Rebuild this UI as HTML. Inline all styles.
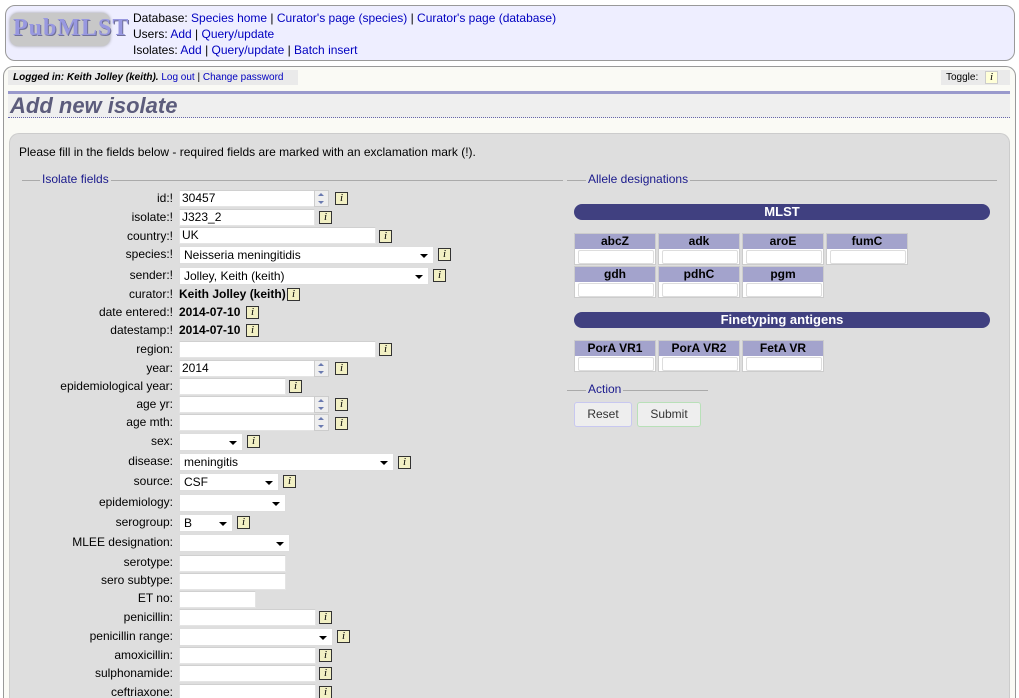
<!DOCTYPE html>
<html style="height:698px;overflow:hidden"><head><meta charset="utf-8">
<style>
*{box-sizing:border-box}
body{margin:0;width:1019px;height:698px;overflow:hidden;background:#fff;font-family:"Liberation Sans",Arial,sans-serif;font-size:12px;color:#000;position:relative}
a{color:#0000c0;text-decoration:none}
.abs{position:absolute}
.lbl{position:absolute;right:846px;white-space:nowrap;font-size:12px;line-height:14px}
.inp{position:absolute;height:17px;background:#fff;border:1px solid #e4e4e4;border-top-color:#d0d0d0;font-size:12px;line-height:15px;padding-left:2px}
.sel{position:absolute;height:18px;background:#fff;border:1px solid #ddd;font-size:12px;line-height:16px;padding-left:4px}
.sel:after{content:"";position:absolute;right:5px;top:7px;border-left:4px solid transparent;border-right:4px solid transparent;border-top:4px solid #000}
.spin{position:absolute;width:15px;height:17px;background:#eee;border:1px solid #ccc}
.spin:before{content:"";position:absolute;left:3px;top:2px;border-left:3px solid transparent;border-right:3px solid transparent;border-bottom:3px solid #6a7ab0}
.spin:after{content:"";position:absolute;left:3px;top:10px;border-left:3px solid transparent;border-right:3px solid transparent;border-top:3px solid #6a7ab0}
.i{position:absolute;width:13px;height:13px;background:#f2f0c4;border:1px solid #333;font-family:"Liberation Serif",serif;font-style:italic;font-size:11px;line-height:11px;text-align:center}
.b{position:absolute;font-weight:bold;font-size:12px;line-height:14px}
.cell{position:absolute;width:82px;height:32px;border:1px solid #ccc;background:#fff}
.cell .h{background:#a3a3cc;height:15px;text-align:center;font-weight:bold;font-size:12px;line-height:15px}
.cell .f{position:absolute;left:3px;top:16px;width:76px;height:14px;border:1px solid #ddd;border-radius:2px}
.bar{position:absolute;left:574px;width:416px;height:16px;background:#404080;border-radius:8px;color:#fff;font-weight:bold;font-size:13px;text-align:center;line-height:16px}
.leg{position:absolute;color:#1a1a8c;font-size:12px;line-height:14px;background:#dedede;padding:0 2px}
.hl{position:absolute;height:1px;background:#aaa}
</style></head><body>
<div class="abs" style="left:5px;top:5px;width:1010px;height:56px;background:#eeeeff;border:1px solid #999;border-radius:10px"></div>
<div class="abs" style="left:10px;top:13px;width:100px;height:33px;background:#c8c8c8;border-radius:8px;box-shadow:0 0 3px #999"></div>
<div class="abs" style="left:13px;top:15px;font-family:'Liberation Serif',serif;font-weight:bold;font-size:24px;line-height:26px;color:#9898e0;letter-spacing:1px;text-shadow:1px 1px 0 #707098">PubMLST</div>
<div class="abs" style="left:133px;top:10px;line-height:16px;font-size:12px">Database: <a>Species home</a> | <a>Curator's page (species)</a> | <a>Curator's page (database)</a><br>Users: <a>Add</a> | <a>Query/update</a><br>Isolates: <a>Add</a> | <a>Query/update</a> | <a>Batch insert</a></div>

<div class="abs" style="left:3px;top:66px;width:1013px;height:632px;background:#fafaf5;border:1px solid #999;border-bottom:none;border-radius:10px 10px 0 0"></div>
<div class="abs" style="left:8px;top:70px;width:290px;height:15px;background:#eaeaea;font-size:10px;line-height:15px;padding-left:5px"><i><b>Logged in: Keith Jolley (keith).</b></i> <a>Log out</a> | <a>Change password</a></div>
<div class="abs" style="left:941px;top:70px;width:69px;height:15px;background:#eaeaea;font-size:10px;line-height:15px;padding-left:5px">Toggle:</div>
<div class="i" style="left:985px;top:71px;border-color:#ccc;background:#ffffd8">i</div>
<div class="abs" style="left:8px;top:91px;width:1002px;height:3px;background:#9999cc"></div>
<div class="abs" style="left:8px;top:94px;width:1002px;height:24px;background:#efefef;border-bottom:1px dotted #6666aa"></div>
<div class="abs" style="left:10px;top:93px;font-size:22px;font-weight:bold;font-style:italic;color:#5c5c7c;line-height:26px">Add new isolate</div>

<div class="abs" style="left:9px;top:133px;width:1001px;height:565px;background:#dedede;border:1px solid #ccc;border-bottom:none;border-radius:10px 10px 0 0"></div>
<div class="abs" style="left:19px;top:145px">Please fill in the fields below - required fields are marked with an exclamation mark (!).</div>

<div class="hl" style="left:22px;top:180px;width:541px"></div>
<div class="leg" style="left:40px;top:172px">Isolate fields</div>
<div class="hl" style="left:567px;top:180px;width:430px"></div>
<div class="leg" style="left:586px;top:172px">Allele designations</div>

<div class="bar" style="top:204px">MLST</div>
<div class="cell" style="left:574px;top:233px"><div class="h">abcZ</div><div class="f"></div></div>
<div class="cell" style="left:658px;top:233px"><div class="h">adk</div><div class="f"></div></div>
<div class="cell" style="left:742px;top:233px"><div class="h">aroE</div><div class="f"></div></div>
<div class="cell" style="left:826px;top:233px"><div class="h">fumC</div><div class="f"></div></div>
<div class="cell" style="left:574px;top:266px"><div class="h">gdh</div><div class="f"></div></div>
<div class="cell" style="left:658px;top:266px"><div class="h">pdhC</div><div class="f"></div></div>
<div class="cell" style="left:742px;top:266px"><div class="h">pgm</div><div class="f"></div></div>
<div class="bar" style="top:312px">Finetyping antigens</div>
<div class="cell" style="left:574px;top:340px"><div class="h">PorA VR1</div><div class="f"></div></div>
<div class="cell" style="left:658px;top:340px"><div class="h">PorA VR2</div><div class="f"></div></div>
<div class="cell" style="left:742px;top:340px"><div class="h">FetA VR</div><div class="f"></div></div>

<div class="hl" style="left:567px;top:390px;width:141px"></div>
<div class="leg" style="left:586px;top:382px">Action</div>
<div class="abs" style="left:574px;top:402px;width:58px;height:25px;background:#eee;border:1px solid #c8c8f0;border-radius:3px;text-align:center;line-height:23px;color:#333">Reset</div>
<div class="abs" style="left:637px;top:402px;width:64px;height:25px;background:#eee;border:1px solid #b8e0b8;border-radius:3px;text-align:center;line-height:23px;color:#333">Submit</div>

<div class="lbl" style="top:191px">id:!</div><div class="inp" style="left:179px;top:190px;width:136px">30457</div><div class="spin" style="left:314px;top:190px"></div><div class="i" style="left:335px;top:192px">i</div>
<div class="lbl" style="top:210px">isolate:!</div><div class="inp" style="left:179px;top:209px;width:136px">J323_2</div><div class="i" style="left:319px;top:211px">i</div>
<div class="lbl" style="top:229px">country:!</div><div class="inp" style="left:179px;top:227px;width:197px">UK</div><div class="i" style="left:379px;top:230px">i</div>
<div class="lbl" style="top:247px">species:!</div><div class="sel" style="left:179px;top:246px;width:255px">Neisseria meningitidis</div><div class="i" style="left:438px;top:248px">i</div>
<div class="lbl" style="top:268px">sender:!</div><div class="sel" style="left:179px;top:267px;width:250px">Jolley, Keith (keith)</div><div class="i" style="left:433px;top:269px">i</div>
<div class="lbl" style="top:287px">curator:!</div><div class="b" style="left:179px;top:287px">Keith Jolley (keith)</div><div class="i" style="left:287px;top:288px">i</div>
<div class="lbl" style="top:305px">date entered:!</div><div class="b" style="left:179px;top:305px">2014-07-10</div><div class="i" style="left:246px;top:306px">i</div>
<div class="lbl" style="top:323px">datestamp:!</div><div class="b" style="left:179px;top:323px">2014-07-10</div><div class="i" style="left:246px;top:324px">i</div>
<div class="lbl" style="top:342px">region:</div><div class="inp" style="left:179px;top:341px;width:197px"></div><div class="i" style="left:379px;top:343px">i</div>
<div class="lbl" style="top:361px">year:</div><div class="inp" style="left:179px;top:360px;width:136px">2014</div><div class="spin" style="left:314px;top:360px"></div><div class="i" style="left:335px;top:362px">i</div>
<div class="lbl" style="top:379px">epidemiological year:</div><div class="inp" style="left:179px;top:378px;width:107px"></div><div class="i" style="left:289px;top:380px">i</div>
<div class="lbl" style="top:397px">age yr:</div><div class="inp" style="left:179px;top:396px;width:136px"></div><div class="spin" style="left:314px;top:396px"></div><div class="i" style="left:335px;top:398px">i</div>
<div class="lbl" style="top:415px">age mth:</div><div class="inp" style="left:179px;top:414px;width:136px"></div><div class="spin" style="left:314px;top:414px"></div><div class="i" style="left:335px;top:417px">i</div>
<div class="lbl" style="top:434px">sex:</div><div class="sel" style="left:179px;top:433px;width:64px"></div><div class="i" style="left:247px;top:435px">i</div>
<div class="lbl" style="top:454px">disease:</div><div class="sel" style="left:179px;top:453px;width:215px">meningitis</div><div class="i" style="left:398px;top:456px">i</div>
<div class="lbl" style="top:474px">source:</div><div class="sel" style="left:179px;top:473px;width:100px">CSF</div><div class="i" style="left:283px;top:475px">i</div>
<div class="lbl" style="top:495px">epidemiology:</div><div class="sel" style="left:179px;top:494px;width:107px"></div>
<div class="lbl" style="top:515px">serogroup:</div><div class="sel" style="left:179px;top:514px;width:54px">B</div><div class="i" style="left:237px;top:516px">i</div>
<div class="lbl" style="top:535px">MLEE designation:</div><div class="sel" style="left:179px;top:534px;width:111px"></div>
<div class="lbl" style="top:555px">serotype:</div><div class="inp" style="left:179px;top:555px;width:107px"></div>
<div class="lbl" style="top:573px">sero subtype:</div><div class="inp" style="left:179px;top:573px;width:107px"></div>
<div class="lbl" style="top:591px">ET no:</div><div class="inp" style="left:179px;top:591px;width:77px"></div>
<div class="lbl" style="top:610px">penicillin:</div><div class="inp" style="left:179px;top:609px;width:137px"></div><div class="i" style="left:319px;top:611px">i</div>
<div class="lbl" style="top:629px">penicillin range:</div><div class="sel" style="left:179px;top:628px;width:154px"></div><div class="i" style="left:337px;top:630px">i</div>
<div class="lbl" style="top:648px">amoxicillin:</div><div class="inp" style="left:179px;top:647px;width:137px"></div><div class="i" style="left:319px;top:649px">i</div>
<div class="lbl" style="top:666px">sulphonamide:</div><div class="inp" style="left:179px;top:665px;width:137px"></div><div class="i" style="left:319px;top:667px">i</div>
<div class="lbl" style="top:685px">ceftriaxone:</div><div class="inp" style="left:179px;top:684px;width:137px"></div><div class="i" style="left:319px;top:686px">i</div>
</body></html>
